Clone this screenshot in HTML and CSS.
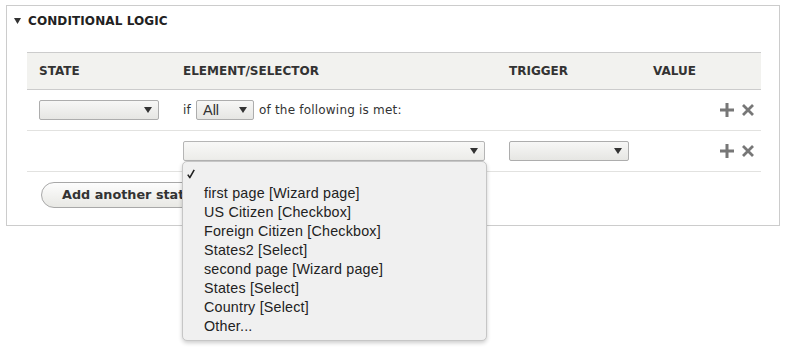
FILE: index.html
```html
<!DOCTYPE html>
<html>
<head>
<meta charset="utf-8">
<link rel="stylesheet" href="styles.css">
</head>
<body>
<div class="fieldset">
  <div class="legend">
    <svg class="caret" width="7" height="6" viewBox="0 0 7 6"><path d="M0 0H7L3.5 6Z" fill="#333"/></svg>
    <span>CONDITIONAL LOGIC</span>
  </div>
  <div class="table">
    <div class="row head">
      <div class="cell">STATE</div>
      <div class="cell">ELEMENT/SELECTOR</div>
      <div class="cell">TRIGGER</div>
      <div class="cell">VALUE</div>
    </div>
    <div class="row">
      <div class="cell"><div class="select w120"><span class="arrow"></span></div></div>
      <div class="cell span2">
        <span>if</span>
        <div class="select all"><span class="val">All</span><span class="arrow"></span></div>
        <span>of the following is met:</span>
      </div>
      <div class="cell actions">
        <svg class="plus" width="14" height="14" viewBox="0 0 14 14"><path d="M7 0V14M0 7H14" stroke="#777" stroke-width="3"/></svg>
        <svg class="times" width="12" height="12" viewBox="0 0 12 12"><path d="M1 1L11 11M11 1L1 11" stroke="#777" stroke-width="2.8"/></svg>
      </div>
    </div>
    <div class="row">
      <div class="cell"></div>
      <div class="cell">
        <div class="combo">
          <div class="select open w302"><span class="arrow"></span></div>
          <div class="popup">
            <div class="opt checked"><svg class="check" width="8" height="10" viewBox="0 0 8 10"><path d="M0.8 5.6L2.8 8.6L7.2 0.8" fill="none" stroke="#222" stroke-width="1.6" stroke-linejoin="round"/></svg></div>
            <div class="opt">first page [Wizard page]</div>
            <div class="opt">US Citizen [Checkbox]</div>
            <div class="opt">Foreign Citizen [Checkbox]</div>
            <div class="opt">States2 [Select]</div>
            <div class="opt">second page [Wizard page]</div>
            <div class="opt">States [Select]</div>
            <div class="opt">Country [Select]</div>
            <div class="opt">Other...</div>
          </div>
        </div>
      </div>
      <div class="cell"><div class="select w120"><span class="arrow"></span></div></div>
      <div class="cell actions">
        <svg class="plus" width="14" height="14" viewBox="0 0 14 14"><path d="M7 0V14M0 7H14" stroke="#777" stroke-width="3"/></svg>
        <svg class="times" width="12" height="12" viewBox="0 0 12 12"><path d="M1 1L11 11M11 1L1 11" stroke="#777" stroke-width="2.8"/></svg>
      </div>
    </div>
  </div>
  <div class="btnrow"><div class="button">Add another state</div></div>
</div>
</body>
</html>
```
FILE: styles.css
```css
html, body {
  margin: 0;
  padding: 0;
  background: #fff;
}
body {
  font-family: "DejaVu Sans", Verdana, sans-serif;
  color: #333;
  width: 786px;
  height: 350px;
  overflow: hidden;
}
.fieldset {
  box-sizing: border-box;
  margin: 5px 0 0 6px;
  width: 774px;
  height: 221px;
  border: 1px solid #ccc;
  padding: 7px 18px 0 20px;
}
.legend {
  display: flex;
  align-items: center;
  gap: 7px;
  height: 16px;
  margin-left: -13px;
  font-weight: bold;
  font-size: 12px;
  letter-spacing: 0.1px;
  color: #222;
}
.caret {
  display: block;
}
.table {
  margin-top: 23px;
}
.row {
  display: grid;
  grid-template-columns: 144px 326px 144px 1fr;
  height: 40px;
  border-bottom: 1px solid #e2e2e0;
  align-items: center;
  font-size: 12px;
  letter-spacing: 0.2px;
}
.row.head {
  height: 36px;
  background: #f2f2ef;
  border-top: 1px solid #ccc;
  border-bottom: 1px solid #ccc;
  font-weight: bold;
  font-size: 12px;
  letter-spacing: 0;
  color: #333;
}
.cell {
  padding-left: 12px;
  display: flex;
  align-items: center;
}
.span2 {
  grid-column: span 2;
  gap: 5px;
}
.select {
  position: relative;
  box-sizing: border-box;
  height: 20px;
  border: 1px solid #adadad;
  border-radius: 2px;
  background: linear-gradient(#f7f7f6, #e6e6e3);
  display: flex;
  align-items: center;
}
.select.w120 { width: 120px; }
.select.w302 { width: 302px; }
.select.open {
  background: linear-gradient(#f8f8f7, #ecece9);
  border-color: #b5b5b5;
}
.select.all {
  width: 58px;
  font-family: "Liberation Sans", Arial, sans-serif;
  font-size: 14.5px;
  letter-spacing: 0;
  color: #333;
}
.val {
  padding-left: 6px;
}
.arrow {
  position: absolute;
  right: 6px;
  top: 6px;
  width: 0;
  height: 0;
  border-left: 4px solid transparent;
  border-right: 4px solid transparent;
  border-top: 6px solid #333;
}
.actions {
  justify-content: flex-end;
  padding-right: 7px;
  gap: 8px;
}
.actions svg { display: block; }
.combo {
  position: relative;
}
.popup {
  position: absolute;
  z-index: 5;
  left: -1px;
  top: 20px;
  box-sizing: border-box;
  width: 305px;
  height: 180px;
  background: #f0f0f0;
  border: 1px solid #c6c6c6;
  border-radius: 5px;
  box-shadow: 0 2px 4px rgba(0,0,0,0.2);
  padding: 2px 0 0 0;
  font-family: "Liberation Sans", Arial, sans-serif;
  font-size: 14.3px;
  color: #222;
}
.opt {
  height: 19px;
  line-height: 20px;
  padding-left: 21px;
  position: relative;
  white-space: nowrap;
}
.check {
  position: absolute;
  left: 4px;
  top: 5px;
  display: block;
}
.btnrow {
  margin-top: 10px;
  margin-left: 14px;
  display: flex;
}
.button {
  box-sizing: border-box;
  height: 26px;
  padding: 0 20px;
  border: 1px solid #a8a8a8;
  border-radius: 13px;
  background: linear-gradient(#fdfdfd, #e8e8e4);
  font-weight: bold;
  font-size: 12.8px;
  line-height: 24px;
  color: #333;
}
```
